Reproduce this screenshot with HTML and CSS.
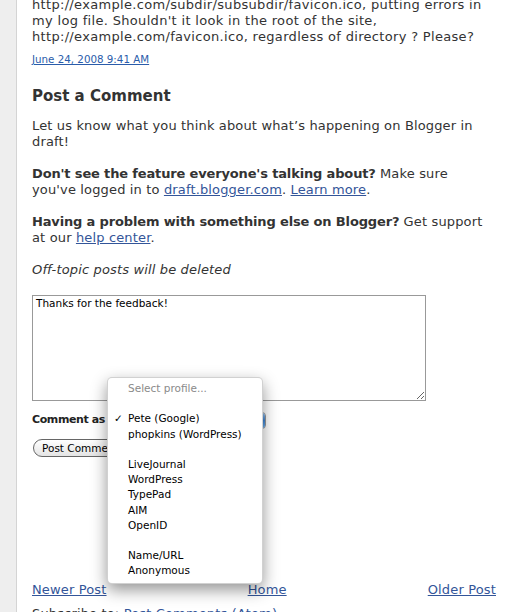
FILE: index.html
```html
<!DOCTYPE html>
<html lang="en">
<head>
  <meta charset="UTF-8">
  <title>Blogger in Draft: Post a Comment</title>
  <link rel="stylesheet" href="styles.css">
</head>
<body>
  <div class="page">
    <div class="gutter"></div>
    <div class="main">
      <!-- Last comment -->
      <p class="comment-body">http://example.com/subdir/subsubdir/favicon.ico, putting errors in my log file. Shouldn't it look in the root of the site, http://example.com/favicon.ico, regardless of directory ? Please?</p>
      <p class="comment-date"><a href="#">June 24, 2008 9:41 AM</a></p>

      <h4 class="section-title">Post a Comment</h4>
      <p class="note">Let us know what you think about what’s happening on Blogger in draft!</p>
      <p class="note"><b>Don't see the feature everyone's talking about?</b> Make sure you've logged in to <a href="#">draft.blogger.com</a>. <a href="#">Learn more</a>.</p>
      <p class="note"><b>Having a problem with something else on Blogger?</b> Get support at our <a href="#">help center</a>.</p>
      <p class="note"><i>Off-topic posts will be deleted</i></p>

      <!-- Comment form -->
      <form class="comment-form">
        <textarea class="comment-text">Thanks for the feedback!</textarea>
        <div class="comment-as">
          <span class="comment-as-label">Comment as</span>
          <span class="profile-select"><span class="select-cap"></span></span>
          <!-- Open profile menu -->
          <ul class="profile-menu">
            <li class="menu-title">Select profile...</li>
            <li class="menu-gap"></li>
            <li class="checked">Pete (Google)</li>
            <li>phopkins (WordPress)</li>
            <li class="menu-gap"></li>
            <li>LiveJournal</li>
            <li>WordPress</li>
            <li>TypePad</li>
            <li>AIM</li>
            <li>OpenID</li>
            <li class="menu-gap"></li>
            <li>Name/URL</li>
            <li>Anonymous</li>
          </ul>
        </div>
        <button type="button" class="post-button">Post Comment</button>
      </form>

      <div class="pager">
        <a href="#">Newer Post</a>
        <a href="#">Home</a>
        <a href="#">Older Post</a>
      </div>
      <p class="feed-links">Subscribe to: <a href="#">Post Comments (Atom)</a></p>
    </div>
  </div>
</body>
</html>
```

FILE: styles.css
```css
/* Base */
* {
  box-sizing: border-box;
}
body {
  margin: 0;
  background: #fff;
  color: #333;
  font-family: "DejaVu Sans", Verdana, sans-serif;
  font-size: 13px;
  line-height: 16px;
  letter-spacing: 0.15px;
}
a {
  color: #335599;
}
b {
  letter-spacing: -0.15px;
}
p {
  margin: 0;
}

/* Page frame */
.page {
  display: flex;
  min-height: 640px;
}
.gutter {
  width: 17px;
  flex-shrink: 0;
  background: #eeeeee;
  border-right: 1px solid #d4d4d4;
}
.main {
  flex: 1;
  padding: 0 20px 0 15px;
}

/* Previous comment */
.comment-body {
  margin-top: -3px;
  letter-spacing: 0.32px;
}
.comment-date {
  margin-top: 7px;
  font-size: 10.3px;
  line-height: 14px;
  letter-spacing: 0;
}
.comment-date a {
  color: #2a5caa;
}

/* Post a comment */
.section-title {
  margin: 20px 0 12px;
  font-size: 15px;
  line-height: 20px;
  letter-spacing: 0;
  color: #333;
}
.note + .note {
  margin-top: 16px;
}

/* Form */
.comment-form {
  margin: 0;
}
.comment-text {
  display: block;
  width: 394px;
  height: 106px;
  margin-top: 17px;
  padding: 1px 3px;
  border: 1px solid #999;
  font-family: "DejaVu Sans", Verdana, sans-serif;
  font-size: 10.5px;
  color: #000;
  resize: both;
}
.comment-as {
  position: relative;
  display: flex;
  align-items: center;
  gap: 4px;
  height: 18px;
  margin-top: 10px;
}
.comment-as-label {
  font-weight: bold;
  font-size: 11px;
  line-height: 18px;
  letter-spacing: -0.4px;
  color: #222;
}
.profile-select {
  display: flex;
  justify-content: flex-end;
  width: 157px;
  height: 17px;
  border: 1px solid #999;
  border-radius: 4px;
  background: linear-gradient(#fff, #e6e6e6);
  overflow: hidden;
}
.select-cap {
  width: 18px;
  background: linear-gradient(#9cc6ef, #3f86d6 50%, #6fb0ee);
}
.post-button {
  display: block;
  height: 18px;
  margin: 10px 0 0 1px;
  padding: 0 8px;
  border: 1px solid #666;
  border-radius: 9px;
  background: linear-gradient(#ffffff, #e4e4e4);
  font-family: "DejaVu Sans", Verdana, sans-serif;
  font-size: 10.5px;
  line-height: 16px;
  color: #000;
}

/* Dropdown menu */
.profile-menu {
  position: absolute;
  left: 75px;
  top: -34px;
  z-index: 2;
  width: 156px;
  margin: 0;
  padding: 3px 0 5px 20px;
  list-style: none;
  background: #fff;
  border: 1px solid rgba(0, 0, 0, 0.18);
  border-radius: 5px;
  box-shadow: 0 6px 16px rgba(0, 0, 0, 0.42);
  font-size: 10.5px;
  line-height: 15.2px;
  letter-spacing: 0;
  color: #000;
}
.profile-menu li {
  position: relative;
  height: 15.2px;
}
.profile-menu .menu-title {
  color: #8a8a8a;
}
.profile-menu .checked::before {
  content: "✓";
  position: absolute;
  left: -14px;
}

/* Footer links */
.pager {
  display: flex;
  justify-content: space-between;
  margin-top: 125px;
}
.feed-links {
  margin-top: 8px;
}
```
